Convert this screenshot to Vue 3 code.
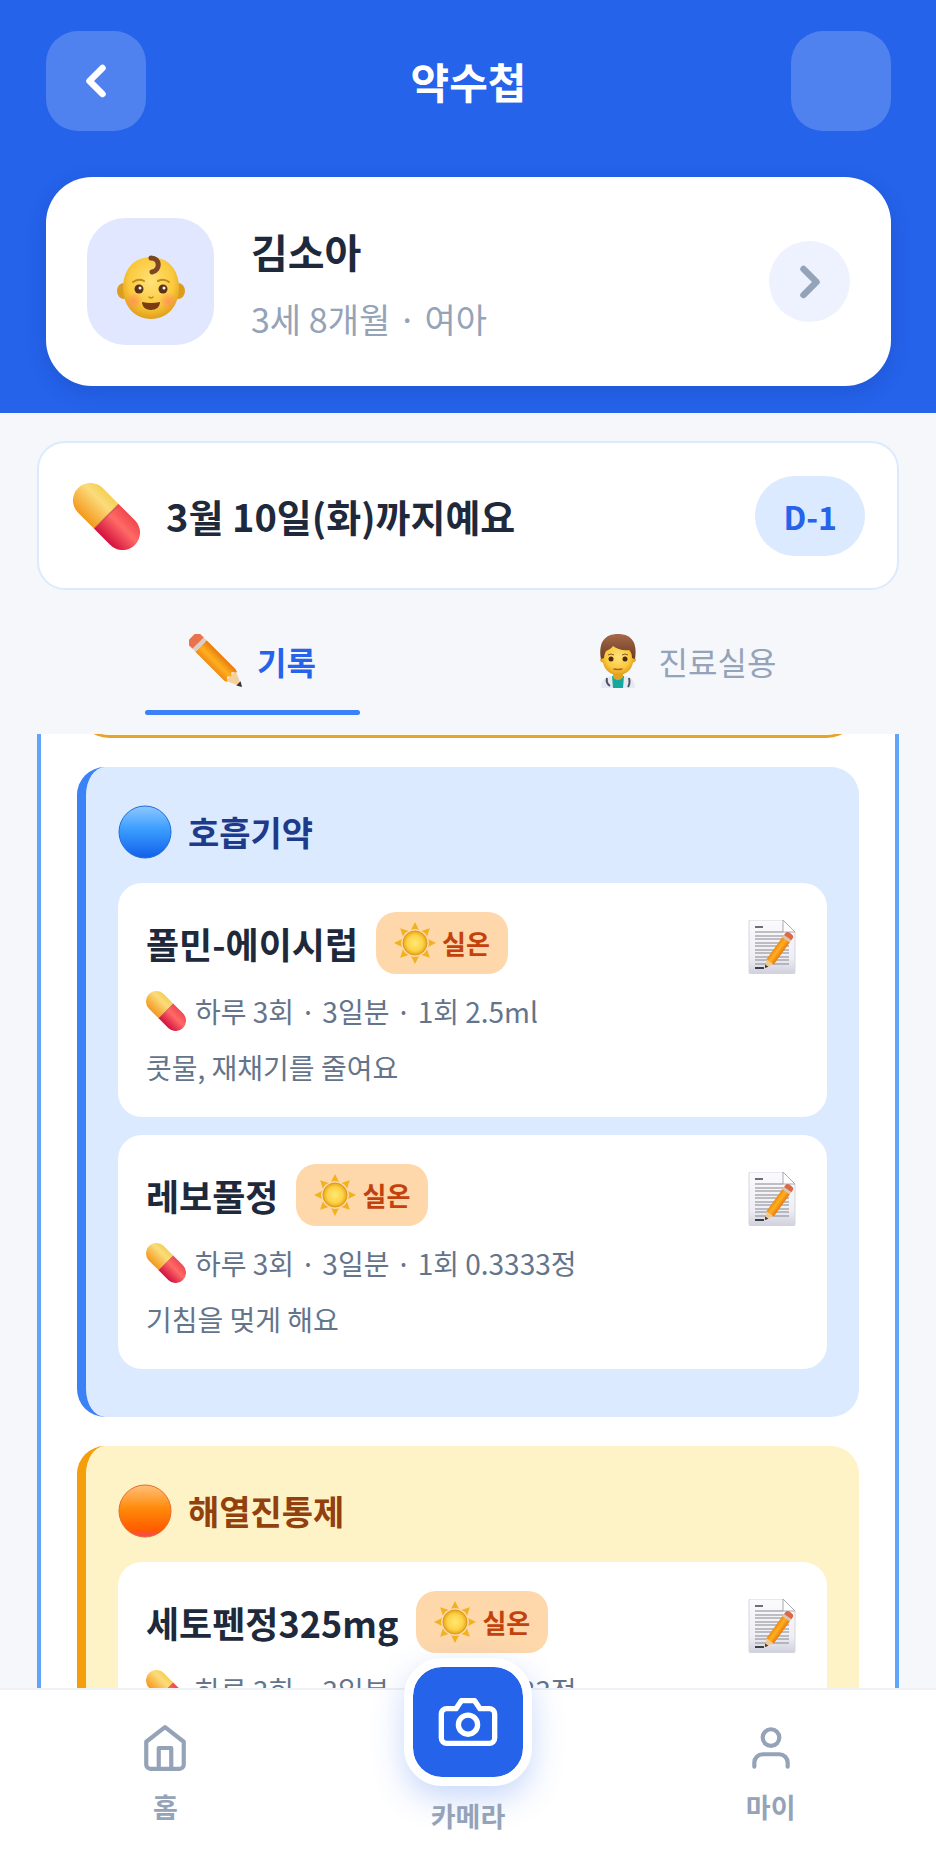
<template>
  <div class="app">
    <!-- shared shapes, used by id below -->
    <svg class="sprite" aria-hidden="true">
      <defs>
        <linearGradient id="pillTop" x1="0" y1="0" x2="0" y2="1">
          <stop offset="0" stop-color="#f5cf55" />
          <stop offset="0.3" stop-color="#fbdc7c" />
          <stop offset="1" stop-color="#f4981c" />
        </linearGradient>
        <linearGradient id="pillBottom" x1="0" y1="0" x2="0" y2="1">
          <stop offset="0" stop-color="#f0484f" />
          <stop offset="0.4" stop-color="#ff6a66" />
          <stop offset="1" stop-color="#d3103f" />
        </linearGradient>
        <radialGradient id="skin" cx="0.5" cy="0.4" r="0.62">
          <stop offset="0" stop-color="#ffe27a" />
          <stop offset="0.65" stop-color="#fbc93d" />
          <stop offset="1" stop-color="#dd9a16" />
        </radialGradient>
        <radialGradient id="blush">
          <stop offset="0" stop-color="#ff8a5c" stop-opacity="0.75" />
          <stop offset="1" stop-color="#ff8a5c" stop-opacity="0" />
        </radialGradient>
        <radialGradient id="sunFill">
          <stop offset="0" stop-color="#ffe873" />
          <stop offset="0.65" stop-color="#fdd347" />
          <stop offset="1" stop-color="#e9a51c" />
        </radialGradient>
        <linearGradient id="paper" x1="0" y1="0" x2="0" y2="1">
          <stop offset="0" stop-color="#fbfbfd" />
          <stop offset="0.7" stop-color="#eeeef4" />
          <stop offset="1" stop-color="#cfd0dc" />
        </linearGradient>
        <linearGradient id="wood" x1="0" y1="0" x2="0" y2="1">
          <stop offset="0" stop-color="#f08a12" />
          <stop offset="0.45" stop-color="#ffb01f" />
          <stop offset="1" stop-color="#e87a0c" />
        </linearGradient>
        <linearGradient id="ballBlue" x1="0" y1="0" x2="0" y2="1">
          <stop offset="0" stop-color="#8fc7ff" />
          <stop offset="0.45" stop-color="#3a9dff" />
          <stop offset="1" stop-color="#1260ea" />
        </linearGradient>
        <linearGradient id="ballOrange" x1="0" y1="0" x2="0" y2="1">
          <stop offset="0" stop-color="#ffc07a" />
          <stop offset="0.45" stop-color="#ff8a0a" />
          <stop offset="0.88" stop-color="#ff5a00" />
          <stop offset="1" stop-color="#f0457a" />
        </linearGradient>
        <linearGradient id="hair" x1="0" y1="0" x2="0" y2="1">
          <stop offset="0" stop-color="#a5694a" />
          <stop offset="1" stop-color="#6d3b22" />
        </linearGradient>
      </defs>
      <symbol id="pill" viewBox="0 0 100 100">
        <g transform="translate(50 50) rotate(45)">
          <path d="M0 -26H-34a26 26 0 0 0 0 52H0z" fill="url(#pillTop)" />
          <path d="M0 -26H34a26 26 0 0 1 0 52H0z" fill="url(#pillBottom)" />
          <path d="M0 -26V26" stroke="#b3301e" stroke-width="2" opacity="0.5" />
        </g>
      </symbol>
      <symbol id="memo" viewBox="0 0 54 54">
        <path d="M5 0H38L50 12V52a2 2 0 0 1-2 2H6a2 2 0 0 1-2-2V1z" fill="url(#paper)" stroke="#d5d6df" stroke-width="1" />
        <path d="M38 0V12H50z" fill="#ffffff" stroke="#a9a9b2" stroke-width="1" />
        <path d="M10 7h8" stroke="#6e6e76" stroke-width="2" />
        <path
          d="M10 12h28M10 16h34M10 19h34M10 23h34M10 26h34M10 30h34M10 33h34M10 37h34M10 40h34M10 44h34"
          stroke="#85858d" stroke-width="1"
        />
        <path d="M10 48h9" stroke="#3f3f46" stroke-width="2" />
        <g transform="translate(20 48) rotate(-54)">
          <path d="M0 0L9 -4V5z" fill="#f3c98a" />
          <path d="M0 0L3 -2V2z" fill="#3c3030" />
          <path d="M8 -4H36V5H8z" fill="url(#wood)" />
          <path d="M35 -4h3V5h-3z" fill="#d8c6b8" />
          <path d="M38 -4h2a3 3 0 0 1 3 3v3a3 3 0 0 1-3 3h-2z" fill="#df6844" />
        </g>
      </symbol>
      <symbol id="pencil" viewBox="0 0 54 54">
        <g transform="translate(53 53) rotate(225)">
          <path d="M0 0L16 -7V7z" fill="#f5cf9c" />
          <path d="M0 0L5 -3V3z" fill="#37333a" />
          <path d="M14 -7L17 -8H58V8H17L14 7L18 3L15 0L18 -3z" fill="url(#wood)" />
          <path d="M58 -8h4V8h-4z" fill="#d9cfca" />
          <path d="M62 -8h4a5 5 0 0 1 5 5v6a5 5 0 0 1-5 5h-4z" fill="#e9734c" />
        </g>
      </symbol>
      <symbol id="doctor" viewBox="0 0 54 54">
        <path d="M10 54c0-8 5-12 12-12h10c7 0 12 4 12 12z" fill="#e6e8f2" />
        <path d="M21 42h12l-1 12h-10z" fill="#16a89f" />
        <path d="M22 38h10v5c-2 4-8 4-10 0z" fill="#e0a325" />
        <path d="M16 44c-1 4 0 6 3 8M38 44c1 4 1 6-1 9" fill="none" stroke="#4b5563" stroke-width="2" />
        <ellipse cx="27" cy="26" rx="18" ry="5" fill="#e7ac2c" />
        <path d="M12 18c0-10 30-10 30 0v9c0 8-7 14-15 14s-15-6-15-14z" fill="url(#skin)" />
        <path
          d="M10 25C7 8 14 0 27 0S47 8 44 25l-3-1c0-4-1-6-3-8-6 1-12-1-16-4-2 3-5 4-7 5-1 2-2 4-2 7z"
          fill="url(#hair)"
        />
        <path d="M17 21q3-2 6 0M31 21q3-2 6 0" fill="none" stroke="#8a5a22" stroke-width="1" />
        <circle cx="20" cy="25" r="2.500" fill="#4a2a16" />
        <circle cx="34" cy="25" r="2.500" fill="#4a2a16" />
        <path d="M23 35q4 1 8 0" fill="none" stroke="#b0602c" stroke-width="1.500" stroke-linecap="round" />
      </symbol>
      <symbol id="baby" viewBox="0 0 68 76">
        <ellipse cx="7" cy="47" rx="7" ry="8" fill="#dc9c20" />
        <ellipse cx="61" cy="47" rx="7" ry="8" fill="#dc9c20" />
        <path d="M34 13c18 0 28 14 28 31S51 75 34 75 6 61 6 44s10-31 28-31z" fill="url(#skin)" />
        <circle cx="17" cy="57" r="9" fill="url(#blush)" />
        <circle cx="51" cy="57" r="9" fill="url(#blush)" />
        <path d="M16 38q6-4 11-1M41 37q6-3 11 1" fill="none" stroke="#c08a1d" stroke-width="2" stroke-linecap="round" />
        <circle cx="22" cy="45" r="4.500" fill="#5a3016" />
        <circle cx="46" cy="45" r="4.500" fill="#5a3016" />
        <circle cx="23" cy="44" r="1.500" fill="#ffffff" />
        <circle cx="47" cy="44" r="1.500" fill="#ffffff" />
        <path d="M32 53q2 2 4 0" fill="none" stroke="#c98a1a" stroke-width="1.500" stroke-linecap="round" />
        <path d="M25 58q9 2 18 0c0 5-4 8-9 8s-9-3-9-8z" fill="#7a3a12" />
        <path d="M34 14c9 0 10 12 1 14" fill="none" stroke="#7b4526" stroke-width="5" stroke-linecap="round" />
      </symbol>
      <symbol id="sun" viewBox="0 0 42 42">
        <g fill="#f2b21f">
          <path
            v-for="a in rays" :key="a"
            d="M21 0L17 8q4-2 8 0z" :transform="`rotate(${a} 21 21)`"
          />
        </g>
        <circle cx="21" cy="21" r="12" fill="url(#sunFill)" stroke="#dc9c1c" stroke-width="1" />
      </symbol>
      <symbol id="ball-blue" viewBox="0 0 54 54">
        <circle cx="27" cy="27" r="26" fill="url(#ballBlue)" stroke="#1f6fd8" stroke-width="1" />
      </symbol>
      <symbol id="ball-orange" viewBox="0 0 54 54">
        <circle cx="27" cy="27" r="26" fill="url(#ballOrange)" stroke="#ec6a28" stroke-width="1" />
      </symbol>
    </svg>

    <header class="top">
      <div class="top-bar">
        <button class="square-btn" type="button" aria-label="뒤로">
          <svg class="chevron" viewBox="0 0 24 24"><path d="M15 18L9 12L15 6" /></svg>
        </button>
        <h1>약수첩</h1>
        <div class="square-btn" aria-hidden="true"></div>
      </div>

      <section class="profile">
        <div class="avatar">
          <svg class="baby" aria-hidden="true"><use href="#baby" /></svg>
        </div>
        <div class="profile-text">
          <h2>{{ child.name }}</h2>
          <p>{{ child.info }}</p>
        </div>
        <button class="round-btn" type="button" aria-label="프로필 보기">
          <svg class="chevron" viewBox="0 0 24 24"><path d="M9 18L15 12L9 6" /></svg>
        </button>
      </section>
    </header>

    <section class="notice">
      <svg class="notice-pill" aria-hidden="true"><use href="#pill" /></svg>
      <strong>3월 10일(화)까지예요</strong>
      <span class="dday">D-1</span>
    </section>

    <div class="tabs" role="tablist">
      <button
        v-for="t in tabs"
        :key="t.id"
        class="tab"
        :class="{ active: activeTab === t.id }"
        type="button"
        role="tab"
        :aria-selected="activeTab === t.id"
        @click="activeTab = t.id"
      >
        <svg class="tab-icon" aria-hidden="true"><use :href="'#' + t.icon" /></svg>
        {{ t.label }}
      </button>
    </div>

    <main class="list">
      <!-- end of the card that is scrolled out above -->
      <div class="prev-card"></div>

      <section v-for="g in groups" :key="g.title" class="group" :class="g.tone">
        <h3>
          <svg class="ball" aria-hidden="true"><use :href="'#ball-' + g.tone" /></svg>
          {{ g.title }}
        </h3>
        <article v-for="m in g.items" :key="m.name" class="med">
          <div class="med-head">
            <h4>{{ m.name }}</h4>
            <span class="storage">
              <svg class="sun" aria-hidden="true"><use href="#sun" /></svg>
              {{ m.storage }}
            </span>
            <button class="memo-btn" type="button" aria-label="메모">
              <svg class="memo" aria-hidden="true"><use href="#memo" /></svg>
            </button>
          </div>
          <p class="dose">
            <svg class="pill" aria-hidden="true"><use href="#pill" /></svg>
            {{ m.dose }}
          </p>
          <p v-if="m.effect" class="effect">{{ m.effect }}</p>
        </article>
      </section>
    </main>

    <nav class="bottom-nav">
      <a href="#home" class="nav-item">
        <svg class="nav-icon" viewBox="0 0 24 24">
          <path d="M3 9l9-7 9 7v11a2 2 0 0 1-2 2H5a2 2 0 0 1-2-2z" />
          <path d="M9 22V12h6v10" />
        </svg>
        <span>홈</span>
      </a>
      <a href="#camera" class="nav-item camera">
        <span class="camera-btn">
          <svg class="camera-icon" viewBox="0 0 24 24">
            <path d="M14.500 4h-5L7.500 7H4a2 2 0 0 0-2 2v9a2 2 0 0 0 2 2h16a2 2 0 0 0 2-2V9a2 2 0 0 0-2-2h-3.500z" />
            <circle cx="12" cy="13" r="3.600" />
          </svg>
        </span>
        <span>카메라</span>
      </a>
      <a href="#my" class="nav-item">
        <svg class="nav-icon" viewBox="0 0 24 24">
          <path d="M20 21v-2a4 4 0 0 0-4-4H8a4 4 0 0 0-4 4v2" />
          <circle cx="12" cy="7" r="4" />
        </svg>
        <span>마이</span>
      </a>
    </nav>
  </div>
</template>

<script setup>
import { ref } from 'vue'

const activeTab = ref('record')
const rays = [0, 45, 90, 135, 180, 225, 270, 315]

const child = { name: '김소아', info: '3세 8개월 · 여아' }

const tabs = [
  { id: 'record', label: '기록', icon: 'pencil' },
  { id: 'clinic', label: '진료실용', icon: 'doctor' }
]

const groups = ref([
  {
    title: '호흡기약',
    tone: 'blue',
    items: [
      { name: '폴민-에이시럽', storage: '실온', dose: '하루 3회 · 3일분 · 1회 2.5ml', effect: '콧물, 재채기를 줄여요' },
      { name: '레보풀정', storage: '실온', dose: '하루 3회 · 3일분 · 1회 0.3333정', effect: '기침을 멎게 해요' }
    ]
  },
  {
    title: '해열진통제',
    tone: 'orange',
    items: [
      { name: '세토펜정325mg', storage: '실온', dose: '하루 3회 · 3일분 · 1회 0.3333정' }
    ]
  }
])
</script>

<style>
body { margin: 0; background: #f5f7fb; }
</style>

<style scoped>
.app {
  height: 100vh;
  display: flex;
  flex-direction: column;
  background: #f5f7fb;
  color: #1e293b;
  font-family: "Noto Sans CJK KR", sans-serif;
}
h1, h2, h3, h4, p { margin: 0; }
button { border: none; padding: 0; font: inherit; cursor: pointer; background: none; }
svg { display: block; flex: none; }
.sprite { position: absolute; width: 0; height: 0; }

.top { flex: none; padding: 31px 45px 27px 46px; background: #2563eb; }
.top-bar { display: flex; align-items: center; justify-content: space-between; }
.top-bar h1 { color: #fff; font-size: 42px; line-height: 60px; font-weight: 700; }
.square-btn {
  width: 100px;
  height: 100px;
  border-radius: 32px;
  display: flex;
  align-items: center;
  justify-content: center;
  background: rgba(255, 255, 255, 0.2);
  color: #fff;
}
.chevron {
  width: 52px;
  height: 52px;
  fill: none;
  stroke: currentColor;
  stroke-width: 3;
  stroke-linecap: round;
  stroke-linejoin: round;
}

.profile {
  display: flex;
  align-items: center;
  gap: 37px;
  margin-top: 46px;
  padding: 41px;
  border-radius: 46px;
  background: #fff;
  box-shadow: 0 6px 20px rgba(15, 40, 120, 0.2);
}
.avatar {
  width: 127px;
  height: 127px;
  border-radius: 38px;
  display: flex;
  align-items: center;
  justify-content: center;
  background: #e0e7ff;
}
.baby { width: 68px; height: 76px; }
.profile-text { flex: 1; }
.profile-text h2 { font-size: 40px; line-height: 60px; font-weight: 700; }
.profile-text p { margin-top: 14px; color: #94a3b8; font-size: 34px; line-height: 48px; }
.round-btn {
  width: 81px;
  height: 81px;
  border-radius: 50%;
  display: flex;
  align-items: center;
  justify-content: center;
  background: #eef2ff;
  color: #94a3b8;
}

.notice {
  flex: none;
  display: flex;
  align-items: center;
  gap: 26px;
  margin: 28px 37px 0;
  padding: 33px 32px 32px 34px;
  border: 2px solid #dbeafe;
  border-radius: 28px;
  background: #fff;
}
.notice-pill { width: 67px; height: 67px; }
.notice strong { flex: 1; font-size: 38px; line-height: 56px; font-weight: 700; }
.dday {
  padding: 0 28px;
  border-radius: 40px;
  background: #dbeafe;
  color: #2563eb;
  font-size: 32px;
  line-height: 80px;
  font-weight: 700;
}

.tabs { flex: none; display: flex; margin: 16px 37px 19px; }
.tab {
  position: relative;
  flex: 1;
  height: 109px;
  display: flex;
  align-items: center;
  justify-content: center;
  gap: 14px;
  color: #94a3b8;
  font-size: 32px;
  line-height: 48px;
}
.tab.active { color: #2563eb; font-weight: 700; }
.tab.active::after {
  content: "";
  position: absolute;
  left: 25%;
  right: 25%;
  bottom: 0;
  height: 5px;
  border-radius: 3px;
  background: #3b82f6;
}
.tab-icon { width: 54px; height: 54px; }

.list {
  flex: 1;
  min-height: 0;
  overflow: hidden;
  margin: 0 37px;
  padding: 0 36px;
  border: solid #60a5fa;
  border-width: 0 4px;
  background: #fff;
}
.prev-card {
  height: 57px;
  margin-top: -56px;
  border: solid #e5a52c;
  border-width: 0 2px 3px;
  border-radius: 0 0 32px 32px;
  background: #fffbeb;
}
.group {
  margin-top: 29px;
  padding: 32px 32px 30px;
  border-left: 9px solid;
  border-radius: 28px;
}
.group.blue { border-color: #3b82f6; background: #dbeafe; }
.group.orange { border-color: #f59e0b; background: #fef3c7; }
.group h3 {
  display: flex;
  align-items: center;
  gap: 16px;
  margin-bottom: 18px;
  font-size: 34px;
  line-height: 66px;
  font-weight: 700;
}
.group.blue h3 { color: #1e3a8a; }
.group.orange h3 { color: #92400e; }
.ball { width: 54px; height: 54px; }

.med {
  margin-bottom: 18px;
  padding: 29px 28px 22px;
  border-radius: 24px;
  background: #fff;
}
.med-head { display: flex; align-items: center; gap: 18px; }
.med-head h4 { font-size: 36px; line-height: 56px; font-weight: 700; }
.storage {
  display: flex;
  align-items: center;
  gap: 6px;
  padding: 0 18px;
  border-radius: 20px;
  background: #fed7aa;
  color: #c2410c;
  font-size: 26px;
  line-height: 62px;
  font-weight: 700;
}
.sun { width: 42px; height: 42px; }
.memo-btn { margin-left: auto; align-self: flex-end; }
.memo { width: 54px; height: 54px; }
.dose, .effect { color: #64748b; font-size: 28px; line-height: 56px; }
.dose { display: flex; align-items: center; gap: 9px; margin-top: 9px; }
.pill { width: 40px; height: 40px; }

.bottom-nav {
  position: relative;
  flex: none;
  display: flex;
  padding: 0 14px 22px;
  border-top: 2px solid #eef1f5;
  background: #fff;
}
.nav-item {
  flex: 1;
  display: flex;
  flex-direction: column;
  align-items: center;
  gap: 16px;
  padding-top: 33px;
  color: #94a3b8;
  font-size: 27px;
  line-height: 36px;
  font-weight: 700;
  text-decoration: none;
}
.nav-icon, .camera-icon {
  fill: none;
  stroke: currentColor;
  stroke-width: 2;
  stroke-linecap: round;
  stroke-linejoin: round;
}
.nav-icon { width: 50px; height: 50px; }
/* the camera button stands out over the top edge of the bar */
.nav-item.camera { gap: 12px; margin-top: -32px; padding-top: 0; }
.camera-btn {
  padding: 23px;
  border: 9px solid #fff;
  border-radius: 38px;
  background: #2563eb;
  background-clip: padding-box;
  color: #fff;
  box-shadow: 0 12px 32px rgba(37, 99, 235, 0.25);
}
.camera-icon { width: 64px; height: 64px; }
</style>
